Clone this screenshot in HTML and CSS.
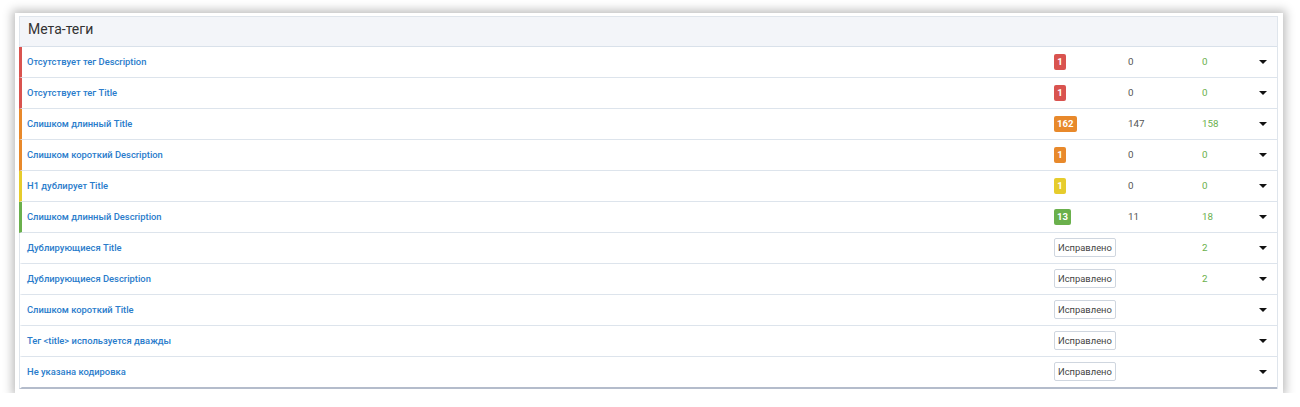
FILE: index.html
```html
<!DOCTYPE html>
<html lang="ru">
<head>
    <meta charset="UTF-8">
    <title>Мета-теги</title>
    <link rel="stylesheet" href="styles.css">
</head>
<body>

<div class="frame">
    <div class="panel">
        <div class="panel-head">Мета-теги</div>

        <!-- Ошибки -->
        <div class="row bar-red">
            <a href="#" class="name">Отсутствует тег Description</a>
            <span><span class="badge red">1</span></span>
            <span class="num">0</span>
            <span class="num good">0</span>
            <span class="caret"></span>
        </div>
        <div class="row bar-red">
            <a href="#" class="name">Отсутствует тег Title</a>
            <span><span class="badge red">1</span></span>
            <span class="num">0</span>
            <span class="num good">0</span>
            <span class="caret"></span>
        </div>
        <div class="row bar-orange">
            <a href="#" class="name">Слишком длинный Title</a>
            <span><span class="badge orange">162</span></span>
            <span class="num">147</span>
            <span class="num good">158</span>
            <span class="caret"></span>
        </div>
        <div class="row bar-orange">
            <a href="#" class="name">Слишком короткий Description</a>
            <span><span class="badge orange">1</span></span>
            <span class="num">0</span>
            <span class="num good">0</span>
            <span class="caret"></span>
        </div>
        <div class="row bar-yellow">
            <a href="#" class="name">H1 дублирует Title</a>
            <span><span class="badge yellow">1</span></span>
            <span class="num">0</span>
            <span class="num good">0</span>
            <span class="caret"></span>
        </div>
        <div class="row bar-green">
            <a href="#" class="name">Слишком длинный Description</a>
            <span><span class="badge green">13</span></span>
            <span class="num">11</span>
            <span class="num good">18</span>
            <span class="caret"></span>
        </div>

        <!-- Исправленные -->
        <div class="row">
            <a href="#" class="name">Дублирующиеся Title</a>
            <span><span class="fixed">Исправлено</span></span>
            <span class="num"></span>
            <span class="num good">2</span>
            <span class="caret"></span>
        </div>
        <div class="row">
            <a href="#" class="name">Дублирующиеся Description</a>
            <span><span class="fixed">Исправлено</span></span>
            <span class="num"></span>
            <span class="num good">2</span>
            <span class="caret"></span>
        </div>
        <div class="row">
            <a href="#" class="name">Слишком короткий Title</a>
            <span><span class="fixed">Исправлено</span></span>
            <span class="num"></span>
            <span class="num good"></span>
            <span class="caret"></span>
        </div>
        <div class="row">
            <a href="#" class="name">Тег &lt;title&gt; используется дважды</a>
            <span><span class="fixed">Исправлено</span></span>
            <span class="num"></span>
            <span class="num good"></span>
            <span class="caret"></span>
        </div>
        <div class="row last">
            <a href="#" class="name">Не указана кодировка</a>
            <span><span class="fixed">Исправлено</span></span>
            <span class="num"></span>
            <span class="num good"></span>
            <span class="caret"></span>
        </div>
    </div>
</div>

</body>
</html>
```

FILE: styles.css
```css
/* Общие стили */
body {
    margin: 0;
    padding: 0;
    background: #fff;
    font-family: Roboto, "Liberation Sans", Arial, sans-serif;
    color: #333;
}

.frame {
    margin: 13px 0 0 15px;
    width: 1268px;
    padding: 3px 5px 4px 4px;
    box-sizing: border-box;
    background: #fff;
    box-shadow: 0 0 9px 3px rgba(0, 0, 0, 0.25);
}

.panel {
    border: 1px solid #dfe5ec;
    border-bottom: none;
}

.panel-head {
    height: 29px;
    line-height: 24px;
    padding-left: 8px;
    background: #f3f5f9;
    border-bottom: 1px solid #d9e1ea;
    font-size: 14px;
    color: #333;
}

.row {
    display: grid;
    grid-template-columns: 1fr 74px 74px 57px 18px;
    align-items: center;
    height: 29px;
    padding-left: 5px;
    padding-bottom: 1px;
    border-left: 3px solid transparent;
    border-bottom: 1px solid #dde4ec;
    margin-left: -1px;
    font-size: 9.4px;
}

.row.last {
    border-bottom: 2px solid #b4bccb;
}

.bar-red { border-left-color: #d9534f; }
.bar-orange { border-left-color: #e8892b; }
.bar-yellow { border-left-color: #e6cc2c; }
.bar-green { border-left-color: #6ab04c; }

.name {
    color: #2a7ccb;
    text-decoration: none;
    font-weight: 500;
}

.name:hover {
    text-decoration: underline;
}

.badge {
    display: inline-block;
    padding: 0 3px;
    min-width: 6px;
    height: 16px;
    line-height: 16px;
    border-radius: 2px;
    color: #fff;
    font-weight: 700;
    font-size: 9.6px;
    text-align: center;
}

.badge.red { background: #d9534f; }
.badge.orange { background: #e8892b; }
.badge.yellow { background: #e6cc2c; }
.badge.green { background: #6ab04c; }

.fixed {
    display: inline-block;
    height: 17px;
    line-height: 17px;
    padding: 0 3px;
    border: 1px solid #cfd6df;
    border-radius: 2px;
    background: #fff;
    color: #444;
    font-size: 9.4px;
}

.num {
    color: #555;
    font-weight: 400;
    font-size: 9.8px;
}

.num.good {
    color: #6ab04c;
}

.caret {
    width: 0;
    height: 0;
    border-left: 4px solid transparent;
    border-right: 4px solid transparent;
    border-top: 4px solid #111;
}
```
